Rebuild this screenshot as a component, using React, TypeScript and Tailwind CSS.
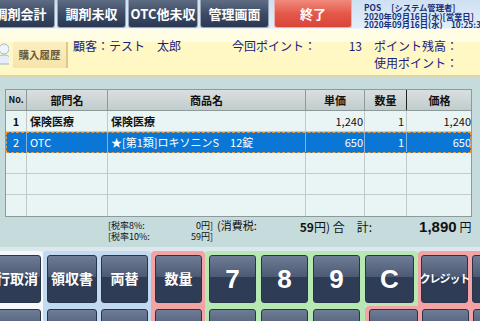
import { ReactNode } from 'react';

const jp = { fontFamily: '"Noto Sans CJK JP", "Noto Sans", sans-serif' };

function TopButton({ label, width, red }: { label: string; width: string; red?: boolean }) {
  return (
    <div
      className={`${width} h-[28px] shrink-0 flex items-center justify-center rounded-b-[3px] border border-t-0 text-[13px] font-bold text-white ${
        red
          ? 'border-[#e8b0a8] bg-gradient-to-b from-[#f08a7c] via-[#e4584a] to-[#d84638]'
          : 'border-[#9aa6b8] bg-gradient-to-b from-[#5e6c84] via-[#3e4c66] to-[#2a3850]'
      }`}
    >
      {label}
    </div>
  );
}

function Key({ children, width, small }: { children?: ReactNode; width: string; small?: boolean }) {
  return (
    <div
      className={`${width} h-[48px] shrink-0 rounded-[3px] border border-[#2a3448] bg-gradient-to-b from-[#6e7c96] from-0% via-[#4c5a74] via-45% to-[#2e3c56] to-46% flex items-center justify-center font-bold text-white whitespace-nowrap ${
        small ? 'text-[11px] tracking-[-1px]' : 'text-[14px]'
      }`}
    >
      {children}
    </div>
  );
}

function Digit({ d, width }: { d: string; width: string }) {
  return (
    <Key width={width}>
      <span className="text-[26px] leading-none" style={{ fontFamily: '"Liberation Sans", Arial, sans-serif' }}>
        {d}
      </span>
    </Key>
  );
}

const cols = 'grid grid-cols-[21px_81px_198px_59px_42px_65px]';

const rows = [
  { no: '1', dept: '保険医療', item: '保険医療', price: '1,240', qty: '1', total: '1,240' },
  { no: '2', dept: 'OTC', item: '★[第1類]ロキソニンS　12錠', price: '650', qty: '1', total: '650', sel: true },
  null,
  null,
  null,
];

export default function App() {
  return (
    <div className="w-[480px] h-[321px] overflow-hidden flex flex-col bg-[#c6dbdb] text-[#111]" style={jp}>
      {/* top bar */}
      <div className="h-[29px] shrink-0 flex bg-gradient-to-b from-[#cfe0f2] to-[#e2eefa] border-b border-[#eef4fa]">
        <div className="flex gap-[2px] -ml-[14px] shrink-0">
          <TopButton label="調剤会計" width="w-[69px]" />
          <TopButton label="調剤未収" width="w-[69px]" />
          <TopButton label="OTC他未収" width="w-[70px]" />
          <TopButton label="管理画面" width="w-[69px]" />
          <div className="w-[1px]" />
          <TopButton label="終了" width="w-[78px]" red />
        </div>
        <div className="ml-[12px] pt-[3px] flex flex-col text-[8.3px] leading-[8.5px] font-bold text-[#18307a] whitespace-nowrap">
          <span>POS　 [システム管理者]</span>
          <span>2020年09月16日(水)[営業日]</span>
          <span>2020年09月16日(水)　10:25:35</span>
        </div>
      </div>

      {/* customer band */}
      <div className="h-[48px] shrink-0 flex bg-gradient-to-b from-[#fffde4] from-0% via-[#fffde4] via-25% to-[#fff8c4] to-30% border-b-2 border-[#d9d6b0]">
        <div className="w-[13px] shrink-0 flex items-end pb-[10px] overflow-hidden">
          <svg width="13" height="22" viewBox="0 0 13 22" className="-ml-[4px]">
            <circle cx="8" cy="6" r="5" fill="#eef4fb" stroke="#9fb6d4" />
            <path d="M0 21c0-6 3-9 8-9s8 3 8 9z" fill="#e4edf8" stroke="#9fb6d4" />
          </svg>
        </div>
        <div className="mt-[13px] mb-[7px] w-[55px] shrink-0 flex items-center justify-center bg-gradient-to-b from-[#fbeec2] to-[#f6e4a8] border-r-2 border-[#e0c88c] text-[10.5px] font-bold text-[#6a5a38]">
          購入履歴
        </div>
        <div className="flex-1 flex flex-col pt-[8px] pl-[5px] text-[12px] text-[#1a2080] leading-[17px] whitespace-nowrap">
          <div className="flex">
            <span className="w-[159px]">顧客：テスト　太郎</span>
            <span className="w-[100px]">今回ポイント：</span>
            <span className="w-[30px] text-right">13</span>
            <span className="ml-[12px]">ポイント残高：</span>
          </div>
          <div className="flex">
            <span className="ml-[301px]">使用ポイント：</span>
          </div>
        </div>
      </div>

      {/* table */}
      <div className="mt-[12px] ml-[5px] w-[467px] border border-[#8c9a9a] bg-[#e9f4f4] text-[11px] font-bold">
        <div className={`${cols} h-[21px] bg-gradient-to-b from-[#d8dfdf] to-[#c3cccc] border-b border-[#8c9a9a]`}>
          <div className="flex items-center justify-center border-r border-[#8c9a9a] text-[9px]">No.</div>
          <div className="flex items-center justify-center border-r border-[#8c9a9a]">部門名</div>
          <div className="flex items-center justify-center border-r border-[#8c9a9a]">商品名</div>
          <div className="flex items-center justify-center border-r border-[#8c9a9a]">単価</div>
          <div className="flex items-center justify-center border-r border-[#222]">数量</div>
          <div className="flex items-center justify-center">価格</div>
        </div>
        {rows.map((r, i) => (
          <div
            key={i}
            className={`${cols} h-[21px] ${i < 4 ? 'border-b' : ''} ${
              r?.sel
                ? 'bg-[#0a76d6] text-white font-normal outline outline-1 outline-dashed outline-[#e89a3c] -outline-offset-1 border-[#0a76d6]'
                : 'border-[#c4cccc]'
            }`}
          >
            <div className={`flex items-center justify-center border-r ${r?.sel ? 'border-[#7fb4e8]' : 'border-[#c0c8c8]'}`}>{r?.no}</div>
            <div className={`flex items-center px-[3px] border-r ${r?.sel ? 'border-[#7fb4e8]' : 'border-[#c0c8c8]'}`}>{r?.dept}</div>
            <div className={`flex items-center px-[3px] whitespace-nowrap border-r ${r?.sel ? 'border-[#7fb4e8]' : 'border-[#c0c8c8]'}`}>{r?.item}</div>
            <div className={`flex items-center justify-end px-[1px] font-normal border-r ${r?.sel ? 'border-[#7fb4e8]' : 'border-[#c0c8c8]'}`}>{r?.price}</div>
            <div className={`flex items-center justify-end px-[2px] font-normal border-r ${r?.sel ? 'border-[#7fb4e8]' : 'border-[#c0c8c8]'}`}>{r?.qty}</div>
            <div className="flex items-center justify-end px-[1px] font-normal">{r?.total}</div>
          </div>
        ))}
      </div>

      {/* totals */}
      <div className="h-[30px] shrink-0 flex pl-[108px] pt-[3px] whitespace-nowrap">
        <div className="flex flex-col text-[9px] leading-[11px]">
          <div className="flex">
            <span className="w-[70px]">[税率8%:</span>
            <span className="w-[35px] text-right">0円]</span>
            <span className="ml-[4px] text-[11px] leading-[11px]">(消費税:</span>
          </div>
          <div className="flex">
            <span className="w-[70px]">[税率10%:</span>
            <span className="w-[35px] text-right">59円]</span>
          </div>
        </div>
        <div className="ml-[43px] flex items-start text-[12px] leading-[14px]">
          <span className="font-bold">59</span>
          <span>円)&nbsp;合　計:</span>
          <span className="ml-[47px] font-bold text-[15px] leading-[14px]" style={{ fontFamily: '"Liberation Sans", Arial, sans-serif' }}>
            1,890
          </span>
          <span className="ml-[3px]">円</span>
        </div>
      </div>

      {/* keypad */}
      <div className="flex-1 bg-[#dde8ee] pt-[4px] flex flex-col">
        <div className="flex h-[55px] items-center">
          <div className="w-[43px] shrink-0 self-stretch bg-[#f6f9fc] rounded-tr-[4px] flex items-center overflow-hidden">
            <div className="-ml-[7px]">
              <Key width="w-[48px]">行取消</Key>
            </div>
          </div>
          <div className="w-[108px] shrink-0 self-stretch bg-[#c2d9f2] rounded-t-[4px] flex items-center gap-[4px] pl-[4px]">
            <Key width="w-[50px]">領収書</Key>
            <Key width="w-[47px]">両替</Key>
          </div>
          <div className="w-[54px] shrink-0 self-stretch bg-[#f3a3a3] rounded-t-[4px] flex items-center pl-[4px]">
            <Key width="w-[47px]">数量</Key>
          </div>
          <div className="w-[213px] shrink-0 self-stretch bg-[#b5e8b3] rounded-t-[4px] flex items-center gap-[5px] pl-[4px]">
            <Digit d="7" width="w-[47px]" />
            <Digit d="8" width="w-[47px]" />
            <Digit d="9" width="w-[47px]" />
            <Digit d="C" width="w-[49px]" />
          </div>
          <div className="flex-1 min-w-0 overflow-hidden self-stretch bg-[#f3a3a3] rounded-tl-[4px] flex items-center gap-[4px] pl-[3px]">
            <Key width="w-[47px]" small>クレジット</Key>
            <Key width="w-[47px]">両替</Key>
          </div>
        </div>
        <div className="flex flex-1 min-h-0">
          <div className="w-[43px] shrink-0 bg-[#f6f9fc] pt-[3px] overflow-hidden">
            <div className="-ml-[7px]"><Key width="w-[48px]" /></div>
          </div>
          <div className="w-[108px] shrink-0 bg-[#c2d9f2] flex gap-[4px] pl-[4px] pt-[3px]">
            <Key width="w-[50px]" />
            <Key width="w-[47px]" />
          </div>
          <div className="w-[54px] shrink-0 bg-[#f3a3a3] pl-[4px] pt-[3px]">
            <Key width="w-[47px]" />
          </div>
          <div className="w-[160px] shrink-0 bg-[#b5e8b3] flex gap-[5px] pl-[4px] pt-[3px]">
            <Digit d="" width="w-[47px]" />
            <Digit d="" width="w-[47px]" />
            <Digit d="" width="w-[47px]" />
          </div>
          <div className="flex-1 min-w-0 overflow-hidden bg-[#f3a3a3] rounded-tl-[4px] flex gap-[4px] pl-[4px] pt-[3px]">
            <Key width="w-[49px]" />
            <Key width="w-[47px]" />
            <Key width="w-[47px]" />
          </div>
        </div>
      </div>
    </div>
  );
}
